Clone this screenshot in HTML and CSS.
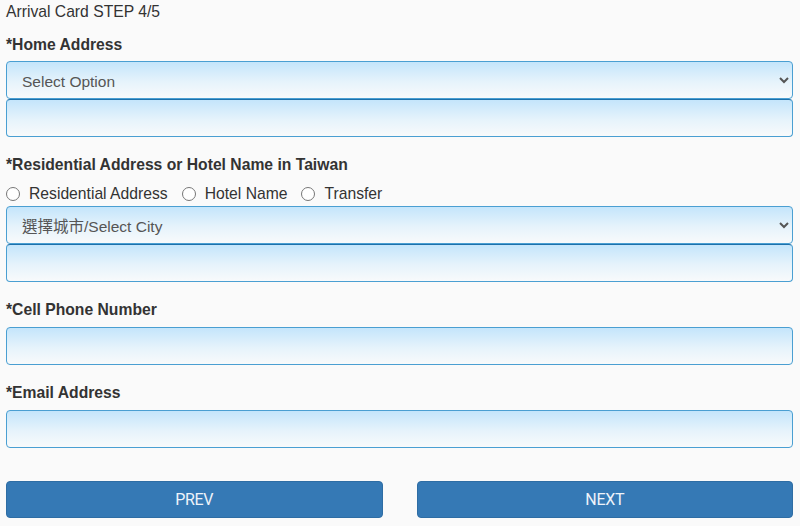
FILE: index.html
```html
<!DOCTYPE html>
<html>
<head>
<meta charset="utf-8">
<link rel="stylesheet" href="styles.css">
</head>
<body>
<div class="page">
  <div class="step">Arrival Card STEP 4/5</div>

  <div class="label first">*Home Address</div>
  <select class="field">
    <option>Select Option</option>
  </select>
  <input class="field" type="text">

  <div class="label">*Residential Address or Hotel Name in Taiwan</div>
  <div class="radios">
    <label class="radio"><input type="radio" name="addr">Residential Address</label>
    <label class="radio"><input type="radio" name="addr">Hotel Name</label>
    <label class="radio"><input type="radio" name="addr">Transfer</label>
  </div>
  <select class="field">
    <option>選擇城市/Select City</option>
  </select>
  <input class="field" type="text">

  <div class="label">*Cell Phone Number</div>
  <input class="field" type="text">

  <div class="label">*Email Address</div>
  <input class="field" type="text">

  <div class="buttons">
    <button class="btn">PREV</button>
    <button class="btn">NEXT</button>
  </div>
</div>
</body>
</html>
```

FILE: styles.css
```css
html, body {
  margin: 0;
  padding: 0;
  background: #fafafa;
}
body {
  font-family: "Liberation Sans", Arial, "Noto Sans CJK TC", sans-serif;
  color: #333;
}
.page {
  display: flex;
  flex-direction: column;
  padding: 2px 7px 0 6px;
}
.step {
  font-size: 15.7px;
  line-height: 20px;
  color: #333;
}
.label {
  font-size: 15.7px;
  font-weight: bold;
  line-height: 20px;
  color: #333;
  margin-top: 18px;
  margin-bottom: 7px;
}
.label.first {
  margin-top: 13px;
  margin-bottom: 6px;
}
.field {
  box-sizing: border-box;
  width: 100%;
  height: 38px;
  margin: 0;
  border: 1.5px solid #4a9fd2;
  border-radius: 4px;
  background: linear-gradient(to bottom, #c4e5fb 0%, #e6f3fb 55%, #f8fafb 100%);
  font-family: "Liberation Sans", Arial, "Noto Sans CJK TC", sans-serif;
  font-size: 15.5px;
  color: #555;
  padding: 0 14px;
  outline: none;
}
select.field {
  padding-left: 11px;
  padding-top: 2px;
}
select.field + input.field {
  border-top-color: #1d70aa;
}
.radios {
  display: flex;
  align-items: center;
  margin-top: 2px;
  height: 20px;
  margin-bottom: 2px;
  font-size: 15.7px;
  color: #333;
}
.radio {
  display: flex;
  align-items: center;
  margin-right: 14px;
}
.radio input {
  margin: 0 9px 0 0;
  width: 14px;
  height: 14px;
}
.buttons {
  display: flex;
  gap: 34px;
  margin-top: 33px;
}
.btn {
  flex: 1;
  height: 37px;
  border: 1px solid #2e6da4;
  border-radius: 4px;
  background: #3579b5;
  color: #eef3fa;
  font-family: Roboto, "Liberation Sans", sans-serif;
  font-size: 16px;
  letter-spacing: -0.3px;
}
```
